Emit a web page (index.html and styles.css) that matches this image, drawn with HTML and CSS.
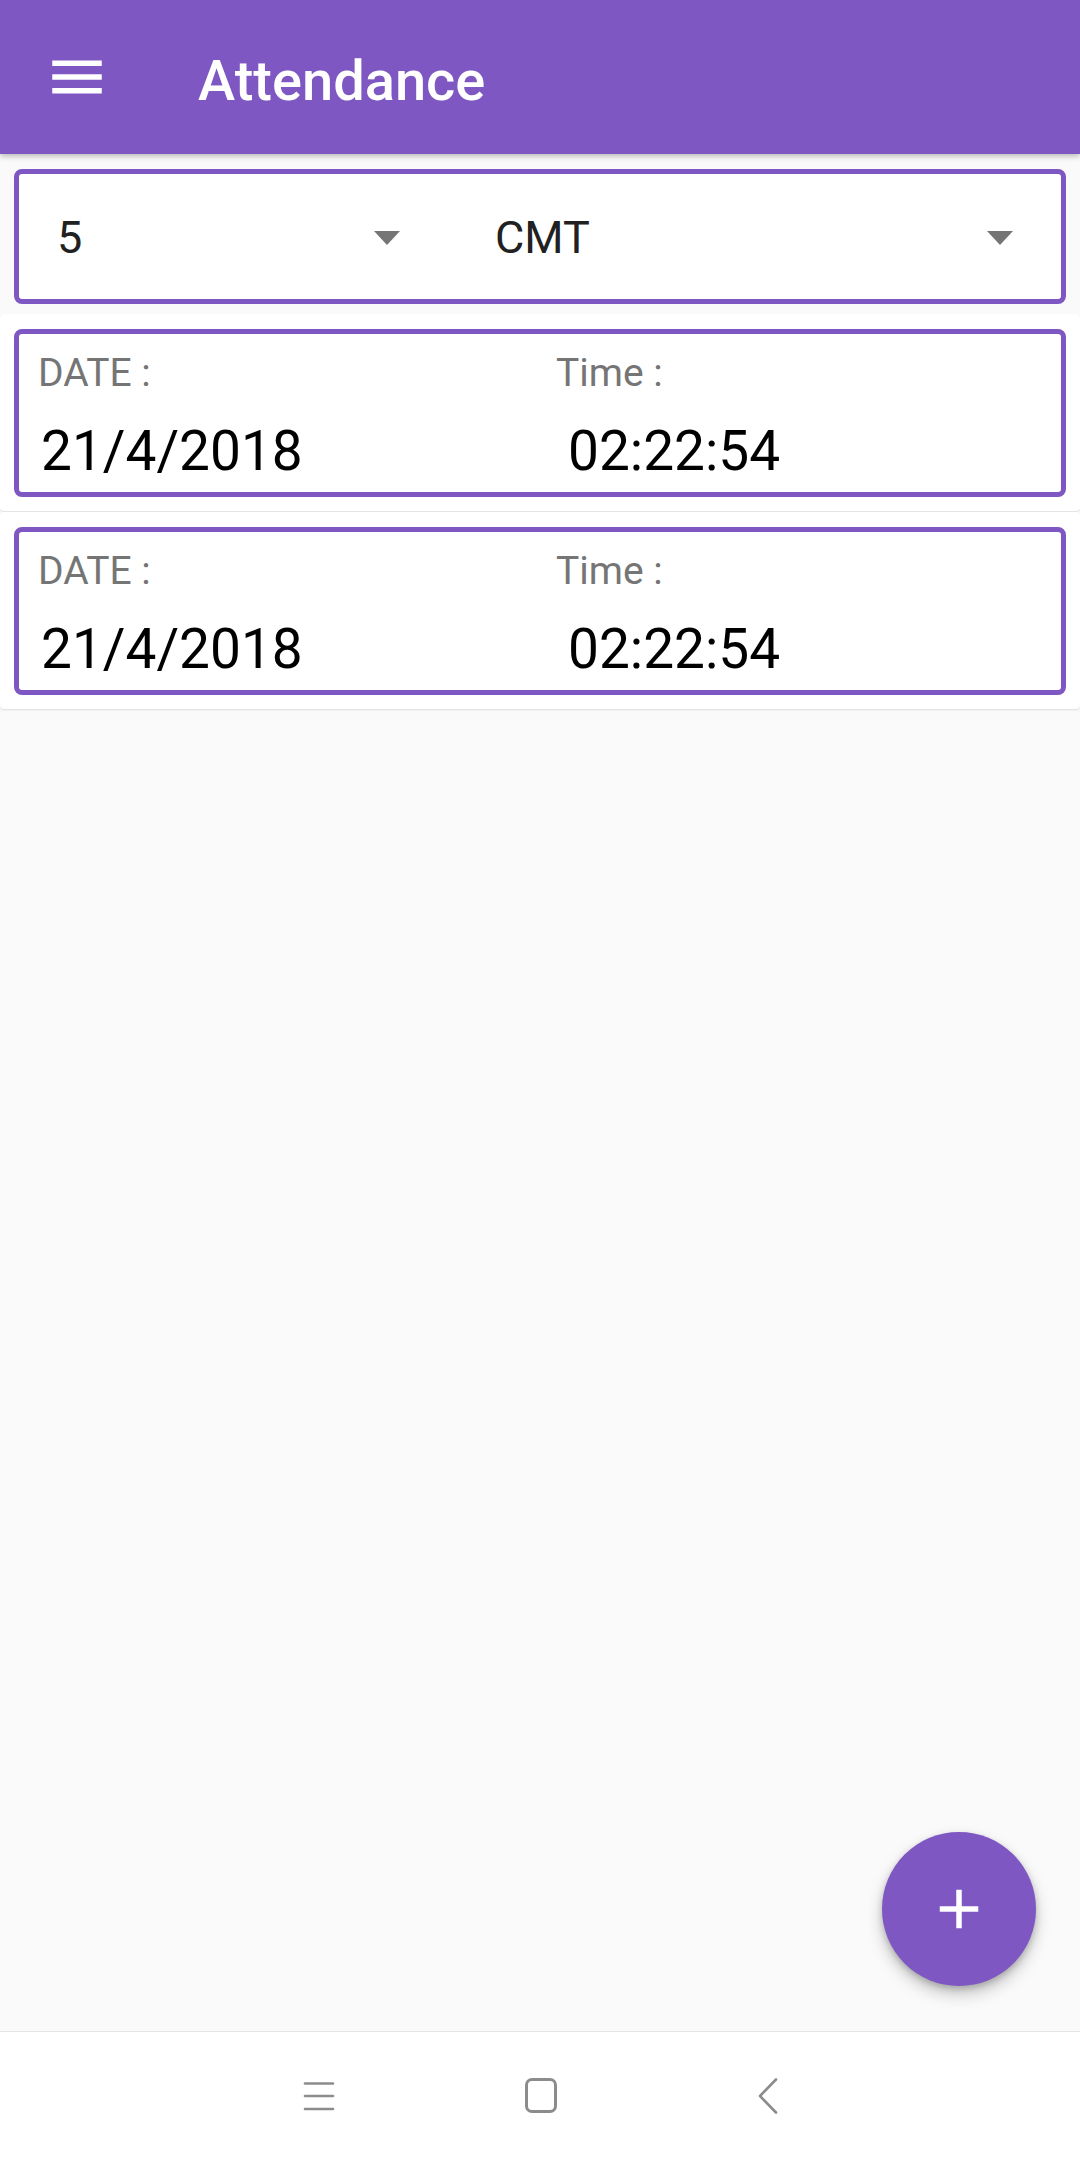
FILE: index.html
```html
<!DOCTYPE html>
<html lang="en">
<head>
<meta charset="utf-8">
<title>Attendance</title>
<link rel="stylesheet" href="styles.css">
</head>
<body>
<div class="screen">
  <header class="appbar">
    <svg class="menu-icon" viewBox="0 0 24 24" width="66" height="66"><path d="M3 18h18v-2H3v2zm0-5h18v-2H3v2zm0-7v2h18V6H3z" fill="#fff"/></svg>
    <h1 class="title">Attendance</h1>
  </header>

  <main class="content">
    <div class="spinner-row">
      <div class="spinner spinner-sem">
        <span class="spinner-text">5</span>
        <svg class="arrow" viewBox="0 0 26 14" width="26" height="14"><polygon points="0,0 26,0 13,14" fill="#757575"/></svg>
      </div>
      <div class="spinner spinner-branch">
        <span class="spinner-text">CMT</span>
        <svg class="arrow" viewBox="0 0 26 14" width="26" height="14"><polygon points="0,0 26,0 13,14" fill="#757575"/></svg>
      </div>
    </div>

    <div class="card">
      <div class="record">
        <div class="col col-date">
          <div class="label">DATE :</div>
          <div class="value">21/4/2018</div>
        </div>
        <div class="col col-time">
          <div class="label">Time :</div>
          <div class="value">02:22:54</div>
        </div>
      </div>
    </div>

    <div class="card">
      <div class="record">
        <div class="col col-date">
          <div class="label">DATE :</div>
          <div class="value">21/4/2018</div>
        </div>
        <div class="col col-time">
          <div class="label">Time :</div>
          <div class="value">02:22:54</div>
        </div>
      </div>
    </div>
  </main>

  <button class="fab" aria-label="Add">
    <svg viewBox="0 0 24 24" width="66" height="66"><path d="M19 13h-6v6h-2v-6H5v-2h6V5h2v6h6v2z" fill="#fff"/></svg>
  </button>

  <nav class="navbar">
    <svg class="nav-icon nav-recent" viewBox="0 0 32 32" width="32" height="32"><g stroke="#8c8c8c" stroke-width="2.6" stroke-linecap="round"><line x1="2" y1="3.5" x2="30" y2="3.5"/><line x1="2" y1="16" x2="30" y2="16"/><line x1="2" y1="29" x2="30" y2="29"/></g></svg>
    <svg class="nav-icon nav-home" viewBox="0 0 32 36" width="32" height="36"><rect x="1.5" y="1.5" width="29" height="32" rx="5.5" fill="none" stroke="#8c8c8c" stroke-width="3"/></svg>
    <svg class="nav-icon nav-back" viewBox="0 0 20 36" width="20" height="36"><polyline points="18,1.5 2,18 18,34.5" fill="none" stroke="#8c8c8c" stroke-width="2.6" stroke-linecap="round" stroke-linejoin="round"/></svg>
  </nav>
</div>
</body>
</html>
```

FILE: styles.css
```css
* {
  box-sizing: border-box;
}

html, body {
  margin: 0;
  padding: 0;
}

body {
  background: #fafafa;
  font-family: Roboto, "Liberation Sans", sans-serif;
}

.screen {
  position: relative;
  width: 1080px;
  height: 2160px;
  display: flex;
  flex-direction: column;
  overflow: hidden;
  background: #fafafa;
}

/* App bar */
.appbar {
  position: relative;
  z-index: 2;
  flex: 0 0 154px;
  height: 154px;
  background: #7e57c2;
  display: flex;
  align-items: center;
  padding-left: 44px;
  box-shadow: 0 2px 6px rgba(0, 0, 0, 0.28);
}

.menu-icon {
  display: block;
  flex: 0 0 66px;
}

.title {
  margin: 8px 0 0 88px;
  font-size: 56px;
  font-weight: 500;
  color: #ffffff;
  line-height: normal;
}

/* Content */
.content {
  flex: 1;
  display: flex;
  flex-direction: column;
  padding-top: 15px;
}

.spinner-row {
  margin: 0 14px;
  height: 135px;
  border: 5px solid #7e57c2;
  border-radius: 8px;
  background: #ffffff;
  display: flex;
}

.spinner {
  display: flex;
  align-items: center;
  padding-top: 2px;
}

.spinner-sem {
  flex: 0 0 429px;
  padding-left: 38px;
}

.spinner-branch {
  flex: 1;
  padding-left: 47px;
}

.spinner-text {
  flex: 1;
  font-size: 45px;
  color: #212121;
  line-height: normal;
}

.arrow {
  display: block;
  margin-right: 48px;
  margin-top: 0;
}

.card {
  background: #ffffff;
  border-radius: 4px;
  padding: 15px 14px 14px;
  box-shadow: 0 1px 2px rgba(0, 0, 0, 0.12);
  margin-bottom: 1px;
}

.spinner-row + .card {
  margin-top: 10px;
}

.record {
  height: 168px;
  border: 5px solid #7e57c2;
  border-radius: 8px;
  display: grid;
  grid-template-columns: 1fr 1fr;
}

.col {
  padding: 17px 0 0 19px;
}

.col-time {
  padding-left: 16px;
}

.label {
  font-size: 39px;
  line-height: 44px;
  color: #757575;
}

.value {
  margin-top: 24px;
  padding-left: 3px;
  font-size: 55px;
  line-height: 64px;
  color: #000000;
}

.col-time .value {
  padding-left: 12px;
}

/* Floating action button */
.fab {
  position: absolute;
  right: 44px;
  bottom: 174px;
  width: 154px;
  height: 154px;
  border: none;
  border-radius: 50%;
  background: #7e57c2;
  padding: 0;
  display: flex;
  align-items: center;
  justify-content: center;
  box-shadow: 0 8px 16px rgba(0, 0, 0, 0.22), 0 3px 6px rgba(0, 0, 0, 0.18);
}

.fab svg {
  display: block;
}

/* System navigation bar */
.navbar {
  flex: 0 0 129px;
  height: 129px;
  background: #ffffff;
  border-top: 1px solid #e4e4e4;
  padding-top: 0;
  display: flex;
  align-items: center;
  justify-content: center;
  gap: 190px;
}

.nav-icon {
  display: block;
}

.nav-back {
  margin-left: 11px;
}
```
